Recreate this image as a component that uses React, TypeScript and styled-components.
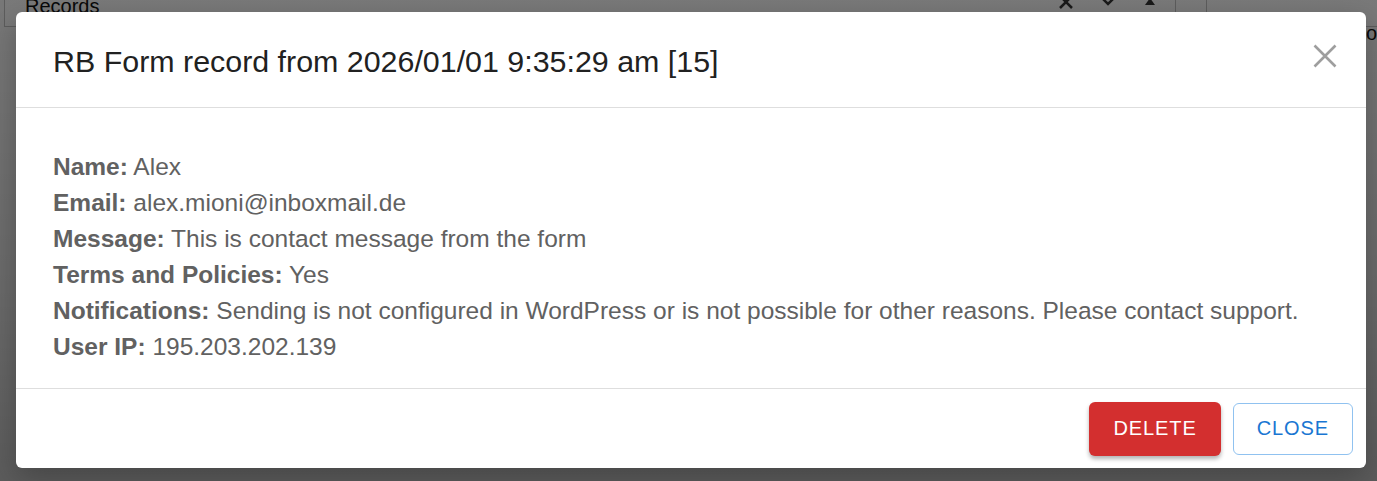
import React from "react";
import styled, { createGlobalStyle } from "styled-components";

const Global = createGlobalStyle`
  html, body { margin: 0; padding: 0; }
  body {
    width: 1377px;
    height: 481px;
    overflow: hidden;
    font-family: "Liberation Sans", Arial, sans-serif;
    background: #ffffff;
  }
`;

const Page = styled.div`
  position: relative;
  width: 1377px;
  height: 481px;
  overflow: hidden;
  background: #f1f1f1;
`;

const TopBar = styled.div`
  display: flex;
  align-items: center;
  height: 26px;
  margin: 0 0 0 4px;
  border-left: 1px solid #bbb;
  border-bottom: 1px solid #bbb;
  background: #f4f4f4;
`;

const PageTitle = styled.div`
  padding: 0 0 14px 20px;
  font-size: 20px;
  color: #111;
  flex: 1;
`;

const TopIcons = styled.div`
  display: flex;
  gap: 24px;
  align-items: flex-start;
  padding-right: 16px;
  height: 100%;
  color: #333;
  margin-top: -14px;
`;

const Sep = styled.div`
  width: 1px;
  height: 100%;
  background: #bbb;
  margin: 0 30px 0 0;
`;

const Backdrop = styled.div`
  position: absolute;
  inset: 0;
  background: linear-gradient(180deg, rgba(0, 0, 0, 0.5) 0%, rgba(0, 0, 0, 0.56) 60%, rgba(0, 0, 0, 0.62) 100%);
`;

const SideText = styled.div`
  position: absolute;
  left: 1366px;
  top: 22px;
  font-size: 20px;
  color: #111;
`;

const Dialog = styled.div`
  position: absolute;
  left: 16px;
  top: 12px;
  width: 1350px;
  height: 456px;
  background: #fff;
  border-radius: 6px;
  display: flex;
  flex-direction: column;
  box-shadow: 0 10px 30px rgba(0, 0, 0, 0.25);
`;

const Header = styled.div`
  display: flex;
  align-items: center;
  justify-content: space-between;
  height: 95px;
  padding: 0 29px 0 37px;
  border-bottom: 1px solid #dedede;
`;

const Title = styled.h2`
  margin: 0;
  font-weight: 400;
  font-size: 30.4px;
  color: #212121;
  padding-top: 3px;
`;

const CloseIcon = styled.button`
  border: 0;
  background: transparent;
  padding: 0;
  width: 24px;
  height: 24px;
  margin-bottom: 8px;
  display: flex;
  align-items: center;
  justify-content: center;
  cursor: pointer;
`;

const Body = styled.div`
  flex: 1;
  padding: 41px 37px 0;
  border-bottom: 1px solid #dedede;
`;

const Row = styled.div`
  font-size: 24.5px;
  line-height: 36px;
  color: #616161;
  white-space: nowrap;
`;

const Label = styled.b`
  font-weight: 700;
`;

const Footer = styled.div`
  display: flex;
  justify-content: flex-end;
  align-items: center;
  gap: 12px;
  height: 79px;
  padding: 0 13px;
`;

const Button = styled.button<{ $variant: "danger" | "outline" }>`
  height: ${(p) => (p.$variant === "danger" ? "54px" : "52px")};
  padding: 0 ${(p) => (p.$variant === "danger" ? "24px" : "23px")};
  border-radius: 6px;
  font-family: "Liberation Sans", Arial, sans-serif;
  font-size: 20px;
  letter-spacing: 0.9px;
  text-transform: uppercase;
  cursor: pointer;
  ${(p) =>
    p.$variant === "danger"
      ? `
    background: #d32f2f;
    color: #fff;
    border: 0;
    box-shadow: 0 3px 4px rgba(0,0,0,0.3);
  `
      : `
    background: #fff;
    color: #1976d2;
    border: 1px solid #90c2f0;
  `}
`;

const rows: [string, string][] = [
  ["Name:", "Alex"],
  ["Email:", "alex.mioni@inboxmail.de"],
  ["Message:", "This is contact message from the form"],
  ["Terms and Policies:", "Yes"],
  [
    "Notifications:",
    "Sending is not configured in WordPress or is not possible for other reasons. Please contact support.",
  ],
  ["User IP:", "195.203.202.139"],
];

export default function App() {
  return (
    <Page>
      <Global />
      <TopBar>
        <PageTitle>Records</PageTitle>
        <TopIcons>
          <svg width="18" height="18" viewBox="0 0 18 18">
            <path d="M3 3 L15 15 M15 3 L3 15" stroke="#333" strokeWidth="2.5" />
          </svg>
          <svg width="18" height="18" viewBox="0 0 18 18">
            <path d="M4 6 L9 11 L14 6" stroke="#333" strokeWidth="2.5" fill="none" />
          </svg>
          <svg width="18" height="18" viewBox="0 0 18 18">
            <path d="M4 12 L9 5 L14 12 Z" fill="#333" />
          </svg>
        </TopIcons>
        <Sep />
        <Sep />
        <div style={{ width: 140 }} />
      </TopBar>
      <SideText>ol</SideText>
      <Backdrop />
      <Dialog role="dialog">
        <Header>
          <Title>RB Form record from 2026/01/01 9:35:29 am [15]</Title>
          <CloseIcon aria-label="close">
            <svg width="24" height="24" viewBox="0 0 24 24">
              <path d="M1.5 1.5 L22.5 22.5 M22.5 1.5 L1.5 22.5" stroke="#9e9e9e" strokeWidth="2.6" />
            </svg>
          </CloseIcon>
        </Header>
        <Body>
          {rows.map(([k, v]) => (
            <Row key={k}>
              <Label>{k}</Label> {v}
            </Row>
          ))}
        </Body>
        <Footer>
          <Button $variant="danger">Delete</Button>
          <Button $variant="outline">Close</Button>
        </Footer>
      </Dialog>
    </Page>
  );
}
